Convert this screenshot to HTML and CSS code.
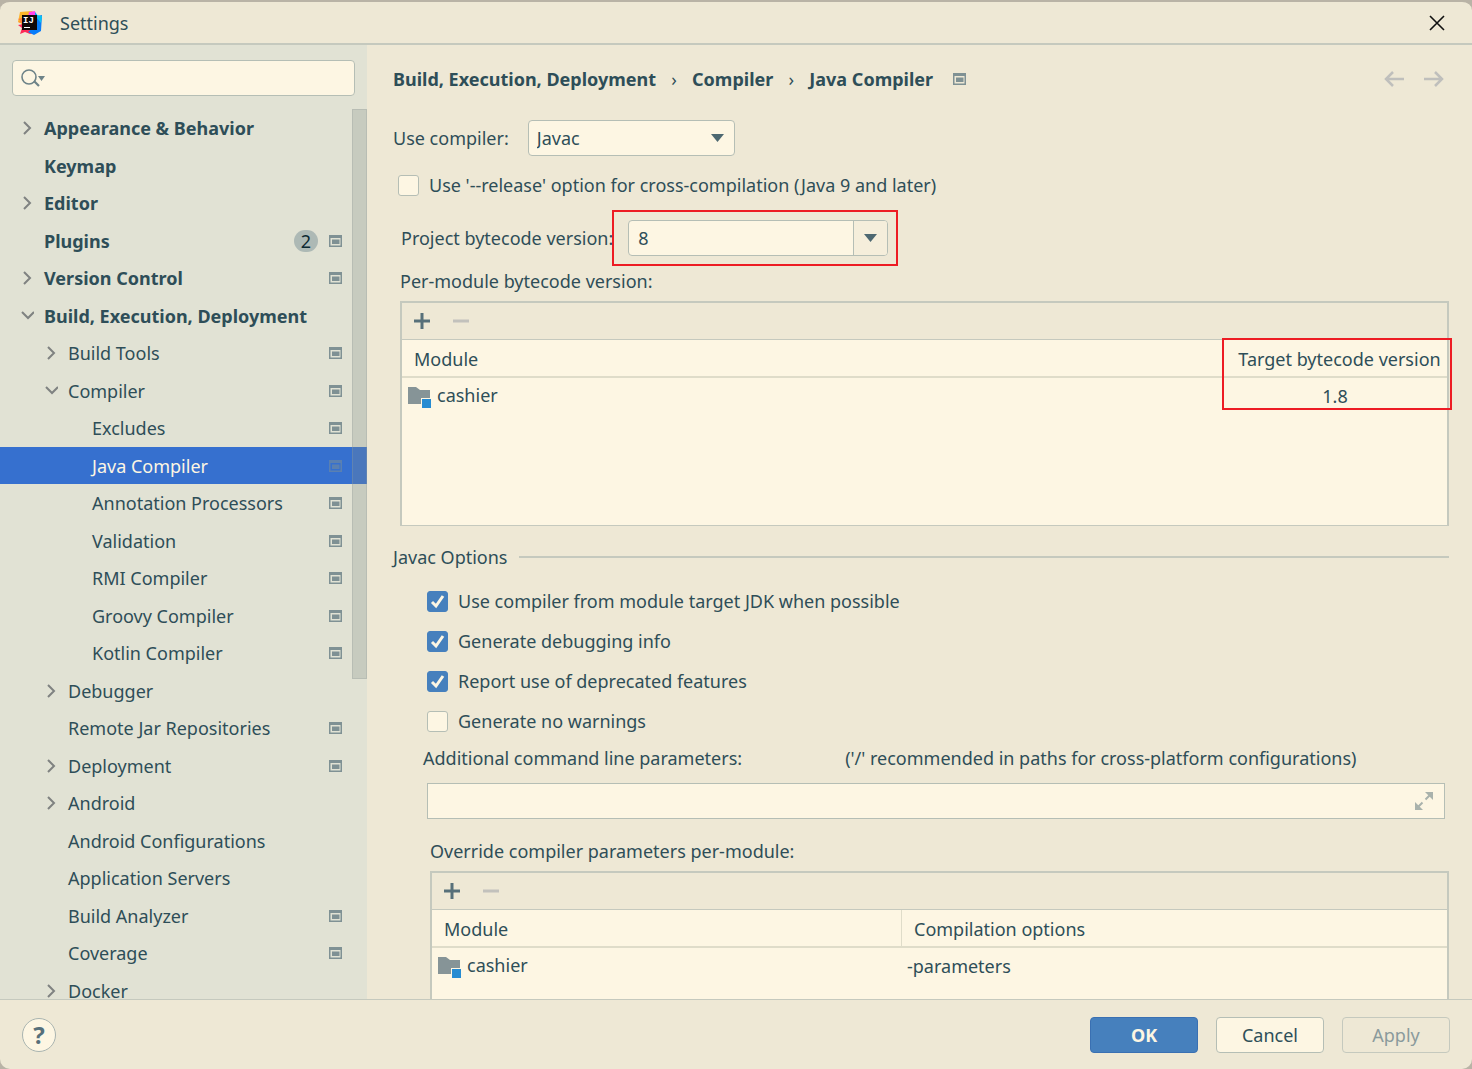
FILE: index.html
```html
<!DOCTYPE html>
<html lang="en">
<head>
    <title>Settings</title>
    <meta charset="utf-8">
    <meta name="viewport" content="width=device-width, initial-scale=1">
    <link rel="stylesheet" href="styles.css">
</head>
<body>
    <!-- shared icons -->
    <svg class="sprite" aria-hidden="true">
        <symbol id="icon-project" viewBox="0 0 13 12">
            <path fill="#7f9194" fill-rule="evenodd" d="M0 0h13v12H0zM1.500 3v7.500h10V3z"/>
            <path fill="#7f9194" d="M3 4.500h7.500V9H3z"/>
        </symbol>
        <symbol id="icon-right" viewBox="0 0 14 14">
            <path fill="none" stroke="#7f8281" stroke-width="2" d="M4 1l6 6-6 6"/>
        </symbol>
        <symbol id="icon-down" viewBox="0 0 14 14">
            <path fill="none" stroke="#7f8281" stroke-width="2" d="M2 3l6 6 6-6"/>
        </symbol>
        <symbol id="icon-add" viewBox="0 0 16 16">
            <path stroke="#57707a" stroke-width="3" d="M8 0v16M0 8h16"/>
        </symbol>
        <symbol id="icon-remove" viewBox="0 0 16 16">
            <path stroke="#c2c1bc" stroke-width="3" d="M0 8h16"/>
        </symbol>
        <symbol id="icon-module" viewBox="0 0 24 22">
            <path fill="#869497" d="M0 0h8l4 3h10v8h-9v6H0z"/>
            <path fill="#268bd2" d="M14 12h9v9h-9z"/>
        </symbol>
    </svg>

    <div class="dialog">
        <header class="titlebar">
            <svg class="logo" width="24" height="24" viewBox="0 0 24 24">
                <path fill="#fdb52a" d="M2 1l12-1 4 5-12 9-6-3z"/>
                <path fill="#fe7c3a" d="M0 8l7-2v10l-4-2 1-2-4-1 3-1z"/>
                <path fill="#fe2857" d="M0 14l6-1 10 9-4 1-5-2-5 2 2-6z"/>
                <path fill="#ff45ed" d="M11 1l6-1 1 6h-8z"/>
                <path fill="#087cfa" d="M17 1l3 4 4-1-1 16-7 4-6-3 7-6z"/>
                <path fill="#07c3f2" d="M17 2l2 2 5 1-1 7-5-6z"/>
                <path fill="#100808" d="M4 4h15v15H4z"/>
                <path fill="#fff" d="M6 16h6v1H6z"/>
                <text x="5" y="12" class="logo-text">IJ</text>
            </svg>
            <h1>Settings</h1>
            <button class="close" aria-label="Close">
                <svg width="16" height="16" viewBox="0 0 16 16"><path stroke="#111" stroke-width="1.6" d="M1 1l14 14M15 1L1 15"/></svg>
            </button>
        </header>

        <div class="body">
            <aside class="sidebar">
                <div class="search">
                    <svg width="24" height="18" viewBox="0 0 24 18">
                        <circle cx="8" cy="8" r="7" fill="none" stroke="#6e8388" stroke-width="1.6"/>
                        <path stroke="#6e8388" stroke-width="2.2" d="M13 12l5 5"/>
                        <path fill="#6e8388" d="M17 7h7l-3.500 5z"/>
                    </svg>
                    <input type="text" aria-label="Search settings">
                </div>
                <ul class="tree">
                    <li><a class="top" href="#"><svg class="arrow"><use href="#icon-right"/></svg>Appearance &amp; Behavior</a></li>
                    <li><a class="top" href="#"><span class="arrow"></span>Keymap</a></li>
                    <li><a class="top" href="#"><svg class="arrow"><use href="#icon-right"/></svg>Editor</a></li>
                    <li><a class="top" href="#"><span class="arrow"></span>Plugins<span class="count">2</span><svg class="project"><use href="#icon-project"/></svg></a></li>
                    <li><a class="top" href="#"><svg class="arrow"><use href="#icon-right"/></svg>Version Control<svg class="project"><use href="#icon-project"/></svg></a></li>
                    <li><a class="top" href="#"><svg class="arrow"><use href="#icon-down"/></svg>Build, Execution, Deployment</a></li>
                    <li><a class="second" href="#"><svg class="arrow"><use href="#icon-right"/></svg>Build Tools<svg class="project"><use href="#icon-project"/></svg></a></li>
                    <li><a class="second" href="#"><svg class="arrow"><use href="#icon-down"/></svg>Compiler<svg class="project"><use href="#icon-project"/></svg></a></li>
                    <li><a class="third" href="#">Excludes<svg class="project"><use href="#icon-project"/></svg></a></li>
                    <li><a class="third selected" href="#">Java Compiler<svg class="project"><use href="#icon-project"/></svg></a></li>
                    <li><a class="third" href="#">Annotation Processors<svg class="project"><use href="#icon-project"/></svg></a></li>
                    <li><a class="third" href="#">Validation<svg class="project"><use href="#icon-project"/></svg></a></li>
                    <li><a class="third" href="#">RMI Compiler<svg class="project"><use href="#icon-project"/></svg></a></li>
                    <li><a class="third" href="#">Groovy Compiler<svg class="project"><use href="#icon-project"/></svg></a></li>
                    <li><a class="third" href="#">Kotlin Compiler<svg class="project"><use href="#icon-project"/></svg></a></li>
                    <li><a class="second" href="#"><svg class="arrow"><use href="#icon-right"/></svg>Debugger</a></li>
                    <li><a class="second" href="#"><span class="arrow"></span>Remote Jar Repositories<svg class="project"><use href="#icon-project"/></svg></a></li>
                    <li><a class="second" href="#"><svg class="arrow"><use href="#icon-right"/></svg>Deployment<svg class="project"><use href="#icon-project"/></svg></a></li>
                    <li><a class="second" href="#"><svg class="arrow"><use href="#icon-right"/></svg>Android</a></li>
                    <li><a class="second" href="#"><span class="arrow"></span>Android Configurations</a></li>
                    <li><a class="second" href="#"><span class="arrow"></span>Application Servers</a></li>
                    <li><a class="second" href="#"><span class="arrow"></span>Build Analyzer<svg class="project"><use href="#icon-project"/></svg></a></li>
                    <li><a class="second" href="#"><span class="arrow"></span>Coverage<svg class="project"><use href="#icon-project"/></svg></a></li>
                    <li><a class="second" href="#"><svg class="arrow"><use href="#icon-right"/></svg>Docker</a></li>
                </ul>
                <div class="scrollbar"></div>
            </aside>

            <main class="content">
                <div class="crumbs">
                    <a href="#">Build, Execution, Deployment</a>
                    <span class="sep">›</span>
                    <a href="#">Compiler</a>
                    <span class="sep">›</span>
                    <a href="#">Java Compiler</a>
                    <svg class="project"><use href="#icon-project"/></svg>
                    <div class="history">
                        <button aria-label="Back"><svg width="20" height="16" viewBox="0 0 20 16"><path fill="none" stroke="#bfbfbc" stroke-width="2.500" d="M20 8H2M9 1L2 8l7 7"/></svg></button>
                        <button aria-label="Forward"><svg width="20" height="16" viewBox="0 0 20 16"><path fill="none" stroke="#bfbfbc" stroke-width="2.500" d="M0 8h18M11 1l7 7-7 7"/></svg></button>
                    </div>
                </div>

                <div class="compiler-row">
                    <label for="compiler">Use compiler:</label>
                    <select id="compiler">
                        <option>Javac</option>
                        <option>Eclipse</option>
                    </select>
                </div>

                <label class="check release"><input type="checkbox">Use '--release' option for cross-compilation (Java 9 and later)</label>

                <div class="version-row">
                    <label for="bytecode">Project bytecode version:</label>
                    <div class="combo">
                        <input type="text" id="bytecode" value="8">
                        <button aria-label="Choose version"><svg width="13" height="8" viewBox="0 0 13 8"><path fill="#4d6871" d="M0 0h13L6.500 8z"/></svg></button>
                        <div class="mark mark-version"></div>
                    </div>
                </div>

                <div class="modules">
                    <h2>Per-module bytecode version:</h2>
                    <div class="panel">
                        <div class="toolbar">
                            <button aria-label="Add"><svg width="16" height="16"><use href="#icon-add"/></svg></button>
                            <button aria-label="Remove" disabled><svg width="16" height="16"><use href="#icon-remove"/></svg></button>
                        </div>
                        <table class="bytecode-table">
                            <thead>
                                <tr><th>Module</th><th class="target">Target bytecode version</th></tr>
                            </thead>
                            <tbody>
                                <tr>
                                    <td><svg class="module"><use href="#icon-module"/></svg>cashier</td>
                                    <td class="target">1.8</td>
                                </tr>
                            </tbody>
                        </table>
                        <div class="mark mark-target"></div>
                    </div>
                </div>

                <h2 class="group-title">Javac Options</h2>
                <div class="options">
                    <label class="check"><input type="checkbox" checked>Use compiler from module target JDK when possible</label>
                    <label class="check"><input type="checkbox" checked>Generate debugging info</label>
                    <label class="check"><input type="checkbox" checked>Report use of deprecated features</label>
                    <label class="check"><input type="checkbox">Generate no warnings</label>
                </div>
                <div class="params-label">
                    <label for="params">Additional command line parameters:</label>
                    <span>('/' recommended in paths for cross-platform configurations)</span>
                </div>
                <div class="params">
                    <input type="text" id="params">
                    <button aria-label="Expand">
                        <svg width="18" height="18" viewBox="0 0 18 18"><path fill="#a9b2ac" d="M10 0h8v8zM0 10l8 8H0z"/><path stroke="#a9b2ac" stroke-width="2" d="M10.500 7.500L15 3M7.500 10.500L3 15"/></svg>
                    </button>
                </div>

                <div class="modules override">
                    <h2>Override compiler parameters per-module:</h2>
                    <div class="panel">
                        <div class="toolbar">
                            <button aria-label="Add"><svg width="16" height="16"><use href="#icon-add"/></svg></button>
                            <button aria-label="Remove" disabled><svg width="16" height="16"><use href="#icon-remove"/></svg></button>
                        </div>
                        <table class="options-table">
                            <thead>
                                <tr><th>Module</th><th>Compilation options</th></tr>
                            </thead>
                            <tbody>
                                <tr>
                                    <td><svg class="module"><use href="#icon-module"/></svg>cashier</td>
                                    <td>-parameters</td>
                                </tr>
                            </tbody>
                        </table>
                    </div>
                </div>
            </main>
        </div>

        <footer class="footer">
            <button class="help" aria-label="Help">?</button>
            <button class="btn primary">OK</button>
            <button class="btn">Cancel</button>
            <button class="btn" disabled>Apply</button>
        </footer>
    </div>
</body>
</html>
```
FILE: styles.css
```css
* {
    box-sizing: border-box;
}
body {
    margin: 0;
    background: #b9b3a6;
    color: #2e4e58;
    font: 18px/24px "Noto Sans", "Open Sans", sans-serif;
}
h1, h2 {
    margin: 0;
    font-size: 18px;
    font-weight: 400;
}
a {
    color: inherit;
    text-decoration: none;
}
input, select, button {
    margin: 0;
    color: inherit;
    font: inherit;
}
button {
    display: flex;
    align-items: center;
    justify-content: center;
    padding: 0;
    border: 0;
    background: none;
}
.sprite {
    position: absolute;
    width: 0;
    height: 0;
}
.dialog {
    display: flex;
    flex-direction: column;
    height: 100vh;
    border-top: 2px solid #b9b3a6;
    border-radius: 10px;
    background: #eee8d5;
    overflow: hidden;
}

/* title bar */
.titlebar {
    display: flex;
    align-items: center;
    height: 43px;
    padding: 0 27px 0 18px;
    border-bottom: 2px solid #c5c9be;
}
.logo {
    margin-right: 18px;
}
.logo-text {
    fill: #fff;
    font: bold 9px "Liberation Mono", monospace;
}
.close {
    margin-left: auto;
}

.body {
    display: flex;
    flex: 1;
    min-height: 0;
}

/* left tree */
.sidebar {
    position: relative;
    flex: none;
    width: 367px;
    padding-top: 15px;
    background: #e1e2d4;
    overflow: hidden;
}
.search {
    display: flex;
    align-items: center;
    height: 36px;
    margin: 0 12px 13px;
    padding-left: 8px;
    border: 1px solid #b5beb5;
    border-radius: 4px;
    background: #fdf6e3;
}
.search input {
    flex: 1;
    border: 0;
    background: none;
    outline: none;
}
.tree {
    margin: 0;
    padding: 0;
    list-style: none;
}
.tree a {
    display: flex;
    align-items: center;
    height: 37px;
    padding-right: 25px;
}
.tree li:nth-child(odd) a {
    height: 38px;
}
.tree .top {
    padding-left: 20px;
    font-weight: 700;
}
.tree .second {
    padding-left: 44px;
}
.tree .third {
    padding-left: 92px;
}
.tree .selected {
    background: #3670cf;
    color: #fdf6e3;
}
.arrow {
    width: 14px;
    height: 14px;
    margin-right: 10px;
}
.project {
    width: 13px;
    height: 12px;
}
.tree .project {
    margin-left: auto;
}
.selected .project {
    opacity: .5;
}
.count {
    width: 24px;
    height: 22px;
    margin-left: auto;
    border-radius: 11px;
    background: #adb9b5;
    color: #0c2a33;
    font-weight: 400;
    line-height: 22px;
    text-align: center;
}
.tree .count + .project {
    margin-left: 11px;
}
.scrollbar {
    position: absolute;
    top: 64px;
    right: 0;
    width: 15px;
    height: 570px;
    border: 1px solid rgba(150, 160, 155, .3);
    background: rgba(130, 140, 135, .27);
}

/* right side */
.content {
    flex: 1;
    min-width: 0;
    padding: 22px 23px 0 26px;
    overflow: hidden;
}
.crumbs {
    display: flex;
    align-items: center;
    height: 24px;
    margin-bottom: 29px;
    font-weight: 700;
}
.sep {
    width: 36px;
    font-weight: 400;
    text-align: center;
}
.crumbs .project {
    margin-left: 20px;
}
.history {
    display: flex;
    gap: 20px;
    margin-left: auto;
    margin-right: 5px;
}
.compiler-row {
    display: flex;
    align-items: center;
    gap: 19px;
    margin-bottom: 17px;
}
select {
    width: 207px;
    height: 36px;
    padding: 0 8px;
    border: 1px solid #b5beb5;
    border-radius: 4px;
    background: #fdf6e3 url("data:image/svg+xml,%3Csvg xmlns='http://www.w3.org/2000/svg' width='13' height='8'%3E%3Cpath fill='%234d6871' d='M0 0h13L6.500 8z'/%3E%3C/svg%3E") no-repeat right 10px center;
    appearance: none;
}
.check {
    display: flex;
    align-items: center;
    gap: 10px;
}
.check input {
    width: 21px;
    height: 21px;
    border: 1px solid #b5beb5;
    border-radius: 3px;
    background: #fdf6e3;
    appearance: none;
}
.check input:checked {
    border-color: #4680bd;
    background: #4680bd url("data:image/svg+xml,%3Csvg xmlns='http://www.w3.org/2000/svg' width='15' height='15'%3E%3Cpath fill='none' stroke='%23fdf6e3' stroke-width='3' d='M2 8l4 4L13 2'/%3E%3C/svg%3E") no-repeat center;
}
.release {
    margin: 0 0 23px 5px;
}
.version-row {
    display: flex;
    align-items: center;
    gap: 15px;
    margin: 0 0 13px 8px;
}
.combo {
    position: relative;
    display: flex;
    width: 260px;
    height: 36px;
    border: 1px solid #b5beb5;
    border-radius: 4px;
    background: #fdf6e3;
}
.combo input {
    flex: 1;
    min-width: 0;
    padding: 0 9px;
    border: 0;
    background: none;
    outline: none;
}
.combo button {
    width: 34px;
    border-left: 1px solid #b5beb5;
    border-radius: 0 3px 3px 0;
    background: #f5eedb;
}
.mark {
    position: absolute;
    border: 2px solid #ed1c24;
    pointer-events: none;
}
.mark-version {
    top: -11px;
    right: -11px;
    bottom: -11px;
    left: -17px;
}
.mark-target {
    top: 35px;
    right: -5px;
    width: 230px;
    height: 72px;
}

/* module tables */
.modules {
    margin-left: 7px;
}
.modules h2 {
    margin-bottom: 8px;
}
.panel {
    position: relative;
    height: 225px;
    border: 2px solid #c5c9be;
    border-bottom-width: 1px;
    background: #fdf6e3;
}
.toolbar {
    display: flex;
    align-items: center;
    gap: 23px;
    height: 37px;
    padding-left: 12px;
    border-bottom: 1px solid #c5c9be;
    background: #eee8d5;
}
table {
    width: 100%;
    border-collapse: separate;
    border-spacing: 0;
    table-layout: fixed;
}
th {
    height: 38px;
    padding: 2px 12px 0;
    border-bottom: 2px solid #dfdcc9;
    font-weight: 400;
    text-align: left;
}
td {
    height: 36px;
    padding: 0 6px;
}
.bytecode-table .target {
    width: 224px;
    padding-left: 0;
    padding-right: 0;
    text-align: center;
    white-space: nowrap;
}
th + th {
    border-left: 1px solid #dfdcc9;
}
.bytecode-table th.target {
    padding-left: 8px;
}
.options-table th:first-child {
    width: 469px;
}
.module {
    width: 24px;
    height: 22px;
    margin-right: 5px;
    vertical-align: -7px;
}

/* javac options */
.group-title {
    display: flex;
    align-items: center;
    gap: 12px;
    margin: 19px 0 12px;
}
.group-title::after {
    flex: 1;
    height: 2px;
    background: #c5c9be;
    content: "";
}
.options {
    margin-left: 34px;
}
.options .check {
    height: 40px;
}
.params-label {
    display: flex;
    gap: 103px;
    margin: 5px 0 13px 30px;
    white-space: nowrap;
}
.params {
    display: flex;
    height: 36px;
    margin: 0 4px 20px 34px;
    padding-right: 11px;
    border: 1px solid #b5beb5;
    background: #fdf6e3;
}
.params input {
    flex: 1;
    border: 0;
    background: none;
    outline: none;
}
.override {
    margin-left: 37px;
}

/* bottom buttons */
.footer {
    display: flex;
    align-items: center;
    gap: 18px;
    height: 70px;
    padding: 0 22px;
    border-top: 1px solid #c5c9be;
}
.help {
    width: 34px;
    height: 34px;
    margin-right: auto;
    border: 1px solid #a9b4b0;
    border-radius: 50%;
    background: #fdf6e3;
    color: #57707a;
    font-size: 24px;
    font-weight: 700;
}
.btn {
    width: 108px;
    height: 36px;
    border: 1px solid #b5beb5;
    border-radius: 4px;
    background: #fdf6e3;
}
.btn.primary {
    border-color: #3a70b2;
    background: #4680bd;
    color: #fdf6e3;
    font-weight: 700;
}
.btn:disabled {
    border-color: #c5c9be;
    background: none;
    color: #8a9a9c;
}
```
